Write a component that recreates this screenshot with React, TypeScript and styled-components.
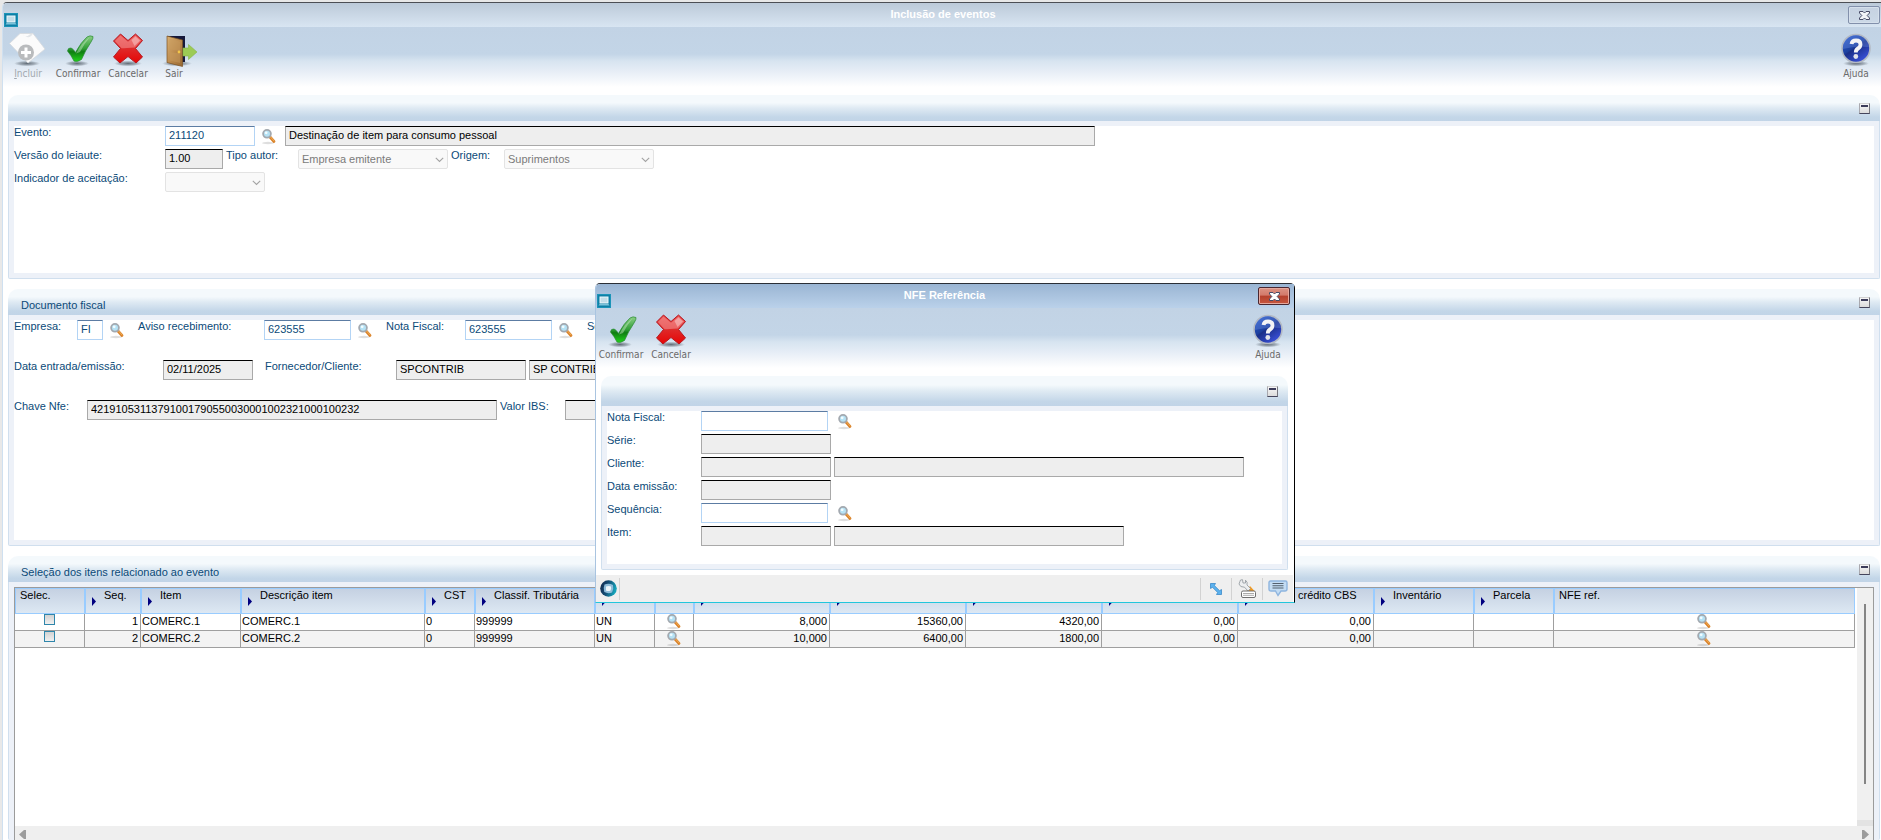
import React, { useId } from 'react';
import styled, { createGlobalStyle, css } from 'styled-components';

const sans = '"Liberation Sans", Arial, sans-serif';

const GlobalStyle = createGlobalStyle`
  *, *::before, *::after { box-sizing: border-box; }
  body { margin: 0; background: #e8e8e8; font: 11px/13px ${sans}; color: #000; }
  button, input, select { font: inherit; margin: 0; }
`;

/* ---------- window frame ---------- */

const Screen = styled.div`
  position: relative;
  display: flex;
  min-height: 100vh;
  padding: 2px 0 0 2px;
`;

const MainWindow = styled.main`
  flex: 1;
  min-width: 0;
  display: flex;
  flex-direction: column;
  background: #fff;
  border-left: 1px solid #cfe0f0;
  border-top: 1px solid #4c4f55;
  border-top-left-radius: 5px;
`;

const TitleBar = styled.header<{ $active?: boolean }>`
  display: flex;
  align-items: flex-end;
  justify-content: space-between;
  height: 24px;
  padding: 0 1px;
  background: ${p => (p.$active
    ? 'linear-gradient(#9ab5d3, #bad1ea)'
    : 'linear-gradient(#bccad9, #d8e5f2)')};
  border-top-left-radius: 4px;
`;

const Title = styled.h1`
  align-self: center;
  margin: 0 0 2px 20px;
  font-size: 11px;
  line-height: 20px;
  color: #fff;
`;

const CloseButton = styled.button<{ $active?: boolean }>`
  align-self: center;
  display: flex;
  align-items: center;
  justify-content: center;
  width: 32px;
  height: 18px;
  padding: 0;
  border: 1px solid ${p => (p.$active ? '#4a2730' : '#8290ab')};
  border-radius: 2px;
  box-shadow: inset 0 0 0 1px ${p => (p.$active ? '#e6a89d' : '#d6e0ec')};
  background: ${p => (p.$active
    ? 'linear-gradient(#dc9283 0, #d3796a 45%, #b5402d 50%, #c7573f 100%)'
    : 'linear-gradient(#c6d2e1, #ccd9e7)')};
`;

const Toolbar = styled.nav`
  display: flex;
  height: 60px;
  padding-top: 6px;
  background: linear-gradient(#c2d3e5 0, #c3d5e7 27px, #d7e4f0 34px, #e6edf6 44px, #fff 60px);
`;

const ToolButton = styled.button<{ $w?: number }>`
  display: flex;
  flex-direction: column;
  align-items: center;
  width: ${p => p.$w ?? 50}px;
  height: 50px;
  padding: 0;
  border: 0;
  background: none;
  color: #6a6a6a;
  font: 10px/16px "DejaVu Sans Condensed", "Noto Sans", sans-serif;
  &:disabled { color: #a2a8ae; }
  &:last-child { margin-left: auto; }
  svg { display: block; overflow: visible; }
`;

/* ---------- panels ---------- */

const Panels = styled.div`
  flex: 1;
  display: flex;
  flex-direction: column;
  gap: 10px;
  padding: 8px 1px 0 5px;
`;

const PanelBox = styled.section<{ $h?: number }>`
  display: flex;
  flex-direction: column;
  ${p => (p.$h ? css`min-height: ${p.$h}px;` : css`flex: 1;`)}
`;

const PanelHead = styled.div<{ $h?: number }>`
  display: flex;
  align-items: center;
  justify-content: space-between;
  height: ${p => p.$h ?? 26}px;
  padding: 0 10px 0 13px;
  border-radius: 10px 10px 0 0;
  background: linear-gradient(#f4f9fc 0, #f4f9fc 30%, #dfeaf3 50%, #c3d6e8 85%, #c1d4e7 100%);
`;

const PanelTitle = styled.h2`
  margin: 0;
  padding-top: 6px;
  font-size: 11px;
  font-weight: normal;
  color: #0b4a78;
`;

const CollapseButton = styled.button`
  display: flex;
  width: 11px;
  height: 11px;
  padding: 1px 1px 0;
  border: 1px solid #c9c9c9;
  border-color: #d3d3d3 #77777f #45455c #a8a8ae;
  background: linear-gradient(#f6f6f6, #dcdcdc);
  &::before {
    content: '';
    flex: 1;
    height: 2px;
    background: #3c3c5a;
  }
`;

const PanelBody = styled.div<{ $flush?: boolean }>`
  flex: 1;
  display: flex;
  flex-direction: column;
  padding: 5px;
  border: 1px solid #d0dfee;
  border-top: 0;
  border-radius: 0 0 2px 2px;
  background: #edf1f8;
  ${p => p.$flush && css`padding-bottom: 0; border-bottom: 0;`}
`;

const Form = styled.form<{ $gap?: number }>`
  flex: 1;
  display: flex;
  flex-direction: column;
  gap: ${p => p.$gap ?? 3}px;
  background: #fff;
`;

const Row = styled.div`
  display: flex;
  height: 20px;
`;

const Label = styled.label<{ $w: number }>`
  flex: none;
  width: ${p => p.$w}px;
  line-height: 12px;
  color: #0b4a78;
  white-space: nowrap;
`;

const Field = styled.input<{ $w: number; $after?: number }>`
  flex: none;
  width: ${p => p.$w}px;
  height: 20px;
  margin-right: ${p => p.$after ?? 3}px;
  padding: 0 3px 2px;
  border: 1px solid #b3d4f5;
  border-top-color: #5c7ca3;
  border-radius: 0;
  outline: 0;
  background: #fff;
  color: #0b4a78;
  &:read-only {
    border-color: #000 #a9a9a9 #a9a9a9;
    background: #eee;
    color: #000;
  }
`;

const SelectWrap = styled.div<{ $w: number }>`
  position: relative;
  flex: none;
  width: ${p => p.$w}px;
  margin-right: 3px;
  svg { position: absolute; right: 4px; top: 8px; pointer-events: none; }
`;

const Select = styled.select`
  appearance: none;
  width: 100%;
  height: 20px;
  padding: 0 3px;
  border: 1px solid #e3e3e3;
  border-radius: 2px;
  background: #f9f9f9;
  color: #7b7b7b;
  &:disabled { opacity: 1; }
`;

const LookupButton = styled.button<{ $gap?: number }>`
  flex: none;
  width: 14px;
  height: 16px;
  margin: 3px ${p => p.$gap ?? 9}px 0 4px;
  padding: 0;
  border: 0;
  background: none;
  svg { display: block; }
`;

/* ---------- grid ---------- */

const GridBox = styled.div`
  flex: 1;
  display: flex;
  flex-direction: column;
  border: solid #9b9b9b;
  border-width: 1px 1px 0;
  background: #fff;
`;

const GridMain = styled.div`
  flex: 1;
  display: flex;
  gap: 2px;
`;

const GridArea = styled.div`
  flex: 1;
  min-width: 0;
`;

const Table = styled.table`
  width: 100%;
  table-layout: fixed;
  border-collapse: separate;
  border-spacing: 0;
`;

const Th = styled.th`
  height: 26px;
  padding: 0 0 0 4px;
  border: 1px solid #99ccff;
  background: linear-gradient(#c5d1e2, #dde8f3);
  font-weight: normal;
  text-align: left;
  vertical-align: top;
  white-space: nowrap;
`;

const Sortable = styled.span`
  display: flex;
  gap: 8px;
  padding-left: 2px;
  svg { margin-top: 8px; }
`;

const Tr = styled.tr`
  background: #fff;
  &:nth-child(even) { background: #f3f3f3; }
`;

const Td = styled.td<{ $align?: 'right' | 'center' }>`
  height: 17px;
  padding: 0 2px 0 1px;
  border-right: 1px solid #9f9f9f;
  border-bottom: 1px solid #9f9f9f;
  line-height: 14px;
  text-align: ${p => p.$align ?? 'left'};
  vertical-align: top;
  white-space: nowrap;
`;

const Check = styled.input`
  appearance: none;
  display: block;
  width: 11px;
  height: 11px;
  margin: 0 auto;
  border: 1px solid #2f86ab;
  background: linear-gradient(#d2d2d2, #f0f0f0);
`;

const CellLookup = styled.button`
  display: block;
  width: 14px;
  height: 16px;
  margin: 0 auto;
  padding: 0;
  border: 0;
  background: none;
  svg { display: block; }
`;

const VScroll = styled.div`
  display: flex;
  flex-direction: column;
  align-items: center;
  justify-content: space-between;
  width: 16px;
  padding-top: 16px;
  background: #f0f0f0;
`;

const Thumb = styled.div`
  width: 2px;
  height: 180px;
  background: #858585;
`;

const ScrollCorner = styled.div`
  width: 16px;
  height: 6px;
  background: #e3e3e3;
`;

const HScroll = styled.div`
  display: flex;
  align-items: center;
  justify-content: space-between;
  height: 14px;
  padding: 2px 4px 0;
  background: #efefef;
`;

/* ---------- dialog ---------- */

const Dialog = styled.div`
  position: absolute;
  left: 595px;
  top: 283px;
  width: 700px;
  display: flex;
  flex-direction: column;
  border: 1px solid #a9c4e0;
  border-top-color: #2b2f36;
  border-right-color: #000;
  border-bottom-color: #22c6dc;
  border-radius: 5px 5px 0 0;
  background: #fff;
`;

const DialogPanels = styled.div`
  display: flex;
  flex-direction: column;
  padding: 8px 6px 5px 5px;
`;

const DialogTitleBar = styled(TitleBar)`
  padding-right: 4px;
`;

const DialogToolbar = styled(Toolbar)`
  padding-right: 1px;
`;

const StatusBar = styled.footer`
  display: flex;
  align-items: center;
  height: 27px;
  margin-right: 1px;
  padding: 0 0 0 4px;
  background: #efefef;
`;

const StatusItem = styled.button<{ $first?: boolean }>`
  display: flex;
  align-items: center;
  justify-content: center;
  width: ${p => (p.$first ? 20 : 31)}px;
  height: 22px;
  padding: 0;
  border: 0 solid #d2d2d2;
  border-left-width: ${p => (p.$first ? 0 : 1)}px;
  border-right-width: ${p => (p.$first ? 1 : 0)}px;
  background: none;
  ${p => p.$first && css`justify-content: flex-start; margin-right: auto;`}
`;

/* ---------- drawings ---------- */

const AppIcon = () => (
  <svg width="14" height="14" viewBox="0 0 14 14" aria-hidden="true">
    <rect width="14" height="14" fill="#0f7fa6" />
    <rect x="0.500" y="0.500" width="13" height="13" fill="none" stroke="#1b94b8" />
    <rect x="3" y="3" width="8" height="6" fill="#c3dde8" stroke="#eef9fc" strokeWidth="1" />
    <path d="M2.500 10 H11.500 L12.500 11.500 H1.500 Z" fill="#7cc3da" />
  </svg>
);

const CloseGlyph = ({ fill = '#fff' }: { fill?: string }) => (
  <svg width="13" height="11" viewBox="0 0 13 11" aria-hidden="true">
    <path
      d="M1.500 1.500 H5 L6.500 3 L8 1.500 H11.500 V3 L9.200 5.500 L11.500 8 V9.500 H8 L6.500 8 L5 9.500 H1.500 V8 L3.800 5.500 L1.500 3 Z"
      fill={fill}
      stroke="#474b66"
    />
  </svg>
);

const Shadow = ({ cx, rx = 13 }: { cx: number; rx?: number }) => {
  const id = useId();
  return (
    <>
      <radialGradient id={id}>
        <stop offset="0" stopColor="#3c4650" stopOpacity="0.75" />
        <stop offset="0.6" stopColor="#4a5560" stopOpacity="0.4" />
        <stop offset="1" stopColor="#5a6570" stopOpacity="0" />
      </radialGradient>
      <ellipse cx={cx} cy="30.500" rx={rx} ry="2.800" fill={`url(#${id})`} />
    </>
  );
};

const NewIcon = () => (
  <svg width="38" height="33" viewBox="0 0 38 33" aria-hidden="true">
    <Shadow cx={18} />
    <path d="M11 0.500 H24 L36 16 L19 30 L0.500 10.500 Z" fill="#fbfbfb" stroke="#d5d9dd" strokeWidth="0.800" />
    <path d="M13 0.500 Q17 5 20 2 Q21 0.500 24 0.500 Q20 8 13 0.500 Z" fill="#e3e6e9" />
    <circle cx="17" cy="19.500" r="8" fill="#b9bbbd" />
    <path d="M15.500 14.500 H18.500 V18 H22 V21 H18.500 V24.500 H15.500 V21 H12 V18 H15.500 Z" fill="#fff" />
  </svg>
);

const ConfirmIcon = () => {
  const id = useId();
  return (
    <svg width="32" height="33" viewBox="0 0 32 33" aria-hidden="true">
      <linearGradient id={id} x1="0" y1="0" x2="0" y2="1">
        <stop offset="0" stopColor="#8ccf86" />
        <stop offset="0.5" stopColor="#2f9e35" />
        <stop offset="0.62" stopColor="#0f7d12" />
        <stop offset="1" stopColor="#22d51a" />
      </linearGradient>
      <Shadow cx={15} rx={12} />
      <path
        d="M5.500 18 Q6 14.500 9 15 Q11 15.500 13.500 19.500 Q19 9 25 4 Q28 2 31 3.500 Q31.500 5 29 9 Q23 18 19.500 26.500 Q15 29.500 12 28 Q9 22 5.500 18 Z"
        fill={`url(#${id})`}
        stroke="#2a8a34"
        strokeWidth="0.700"
      />
      <path d="M14 20.500 Q20 9 27.500 4.500 Q22 11 18 19 Z" fill="#c9ecc5" opacity="0.450" />
    </svg>
  );
};

const CancelIcon = () => {
  const id = useId();
  return (
    <svg width="32" height="33" viewBox="0 0 32 33" aria-hidden="true">
      <linearGradient id={id} x1="0" y1="0" x2="0" y2="1">
        <stop offset="0" stopColor="#e94848" />
        <stop offset="0.5" stopColor="#df2a2a" />
        <stop offset="1" stopColor="#e60505" />
      </linearGradient>
      <Shadow cx={16} rx={14} />
      <path
        d="M1.500 8 L8.500 1 L16 7.500 L23.500 1 L30.500 7.500 L23.500 15.500 L30.500 24 L24 30 L16 23.500 L8 30 L1.500 24 L8.500 15.500 Z"
        fill={`url(#${id})`}
        stroke="#b51a22"
        strokeLinejoin="round"
      />
      <path d="M16 8.800 L23.500 2.400 L29.200 7.500 L23 14.500 Q14 15 9.500 15.300 L2.900 8 L8.500 2.400 Z" fill="#ffd0d0" opacity="0.350" />
      <path d="M19.500 7 L23.500 3.500 L28 7.500 L22.500 13 Z" fill="#fff" opacity="0.350" />
    </svg>
  );
};

const ExitIcon = () => {
  const id = useId();
  return (
    <svg width="42" height="33" viewBox="0 0 42 33" aria-hidden="true">
      <linearGradient id={id} x1="0" y1="0" x2="1" y2="1">
        <stop offset="0" stopColor="#d9b072" />
        <stop offset="0.5" stopColor="#bd8c4f" />
        <stop offset="1" stopColor="#966732" />
      </linearGradient>
      <Shadow cx={24} rx={15} />
      <rect x="14" y="3" width="18" height="26" fill="#16193a" />
      <path d="M14 3 L29.500 7 V33.500 L14 29.500 Z" fill={`url(#${id})`} stroke="#7b5223" strokeWidth="0.700" />
      <path d="M16.500 6 L27 8.500 V18 L16.500 16.500 Z M16.500 19 L27 20.500 V30 L16.500 27.500 Z" fill="#c69a5e" opacity="0.500" />
      <circle cx="26" cy="19" r="1.400" fill="#f4c64a" />
      <path d="M30 15 H35.500 V11.500 L44 19 L35.500 26.500 V23 H30 Z" fill="#9ccb55" stroke="#87b548" strokeWidth="0.600" />
    </svg>
  );
};

const HelpIcon = () => {
  const id = useId();
  return (
    <svg width="32" height="33" viewBox="0 0 32 33" aria-hidden="true">
      <linearGradient id={id} x1="0" y1="0" x2="0.700" y2="1">
        <stop offset="0" stopColor="#2f62d6" />
        <stop offset="0.5" stopColor="#1c3f9e" />
        <stop offset="0.55" stopColor="#1a2f88" />
        <stop offset="1" stopColor="#3b52dd" />
      </linearGradient>
      <Shadow cx={16} rx={13} />
      <circle cx="16" cy="15.500" r="14" fill={`url(#${id})`} stroke="#b4bac4" strokeWidth="1.600" />
      <path d="M3 16 A13 13 0 0 1 29 14 Q15 13 3 16 Z" fill="#7b9bea" opacity="0.300" />
      <path
        d="M11.500 11 Q12 7.500 16 7.500 Q20.500 7.500 20.500 11.200 Q20.500 14 18 15.500 Q15.800 16.800 15.800 19.500"
        fill="none"
        stroke="#f4f4f6"
        strokeWidth="3.800"
      />
      <circle cx="15.800" cy="23.500" r="2.400" fill="#e1e3ea" />
    </svg>
  );
};

const Magnifier = () => (
  <svg width="14" height="16" viewBox="0 0 14 16" aria-hidden="true">
    <ellipse cx="6" cy="14" rx="6" ry="1.200" fill="#000" opacity="0.130" />
    <path d="M8 8 L12 12.500" stroke="#d9822b" strokeWidth="2.800" strokeLinecap="round" />
    <path d="M8.200 7.600 L12.300 12.200" stroke="#f6b45c" strokeWidth="0.900" />
    <circle cx="5" cy="4.800" r="3.900" fill="#b5e2f5" stroke="#a3a9b0" strokeWidth="1.800" />
    <circle cx="4.200" cy="3.800" r="1.400" fill="#f2fcff" />
  </svg>
);

const Chevron = () => (
  <svg width="9" height="6" viewBox="0 0 9 6" aria-hidden="true">
    <path d="M0.800 0.800 L4.500 4.500 L8.200 0.800" fill="none" stroke="#a3a3a3" strokeWidth="1.100" />
  </svg>
);

const SortArrow = () => (
  <svg width="4" height="9" viewBox="0 0 4 9" aria-hidden="true">
    <path d="M0 0 L4 4.500 L0 9 Z" fill="#000080" />
  </svg>
);

const ScrollArrow = ({ right }: { right?: boolean }) => (
  <svg width="7" height="9" viewBox="0 0 7 9" aria-hidden="true">
    <path d={right ? 'M0 0 L2 0 L7 4.500 L2 9 L0 9 Z' : 'M7 0 L5 0 L0 4.500 L5 9 L7 9 Z'} fill="#9c9c9c" />
  </svg>
);

const OrbIcon = () => {
  const id = useId();
  return (
    <svg width="17" height="17" viewBox="0 0 17 17" aria-hidden="true">
      <linearGradient id={id} x1="0" y1="0" x2="1" y2="0.300">
        <stop offset="0" stopColor="#14264a" />
        <stop offset="0.5" stopColor="#134c74" />
        <stop offset="1" stopColor="#15a3b9" />
      </linearGradient>
      <circle cx="8.500" cy="8.500" r="8.300" fill={`url(#${id})`} />
      <path d="M4.500 4.500 Q9 2.800 13 5 Q14 9 12 12.500 Q8 14 4.300 12 Q3 8 4.500 4.500 Z" fill="#8fbcd9" />
      <path d="M6 6.500 Q9 5.500 11 6.500 Q11.500 9 10.300 10.800 Q8 11.500 6 10.500 Z" fill="#eef6fb" />
    </svg>
  );
};

const ResizeIcon = () => (
  <svg width="14" height="14" viewBox="0 0 14 14" aria-hidden="true">
    <path
      d="M1.500 1.500 H6.500 L5.300 3.500 L10.500 8.700 L12.500 7.500 V12.500 H7.500 L8.700 10.500 L3.500 5.300 L1.500 6.500 Z"
      fill="#5cb2ee"
      stroke="#2b7fc4"
      strokeWidth="0.700"
    />
  </svg>
);

const ToolsIcon = () => (
  <svg width="18" height="19" viewBox="0 0 18 19" aria-hidden="true">
    <path d="M8.500 12 L12 7 L16.500 12 Z" fill="#f39a1e" />
    <path
      d="M2.500 1 L4.500 0.700 L5 4 L7.500 4 L7.500 1.200 Q10 3 9 6 L12.500 9.500 L10 12 L6.500 8.200 Q2 8.500 1 5 Z"
      fill="#eceef0"
      stroke="#8e959c"
      strokeWidth="0.800"
    />
    <rect x="3.500" y="12" width="14" height="6.500" rx="1.500" fill="#fff" stroke="#6f6f6f" />
    <path d="M5.500 14.500 H16 M5.500 16.300 H16" stroke="#555" strokeDasharray="1 1" />
  </svg>
);

const ChatIcon = () => (
  <svg width="20" height="17" viewBox="0 0 20 17" aria-hidden="true">
    <path d="M2.500 1 H17.500 Q19 1 19 2.500 V9 Q19 11 17 11 H13 L10 15.500 L7.500 11 H3 Q1 11 1 9 V2.500 Q1 1 2.500 1 Z" fill="#c3dcf3" stroke="#8fb5df" strokeWidth="1.400" />
    <path d="M4.500 3.500 H15.500 M4.500 5.800 H15.500 M4.500 8 H15.500" stroke="#53606e" strokeWidth="1.100" />
  </svg>
);

/* ---------- composed parts ---------- */

interface PanelProps {
  title?: string;
  height?: number;
  headHeight?: number;
  flush?: boolean;
  children: React.ReactNode;
}

const Panel = ({ title, height, headHeight, flush, children }: PanelProps) => (
  <PanelBox $h={height}>
    <PanelHead $h={headHeight}>
      <PanelTitle>{title}</PanelTitle>
      <CollapseButton type="button" aria-label="Recolher" />
    </PanelHead>
    <PanelBody $flush={flush}>{children}</PanelBody>
  </PanelBox>
);

const Lookup = ({ gap }: { gap?: number }) => (
  <LookupButton type="button" aria-label="Pesquisar" $gap={gap}><Magnifier /></LookupButton>
);

interface LabelledProps {
  label: string;
  labelWidth: number;
  width: number;
  value?: string;
  readOnly?: boolean;
  after?: number;
}

const LabelledField = ({ label, labelWidth, width, value = '', readOnly, after }: LabelledProps) => {
  const id = useId();
  return (
    <>
      <Label htmlFor={id} $w={labelWidth}>{label}</Label>
      <Field id={id} $w={width} $after={after} defaultValue={value} readOnly={readOnly} />
    </>
  );
};

const LabelledSelect = ({ label, labelWidth, width, value = '' }: LabelledProps) => {
  const id = useId();
  return (
    <>
      <Label htmlFor={id} $w={labelWidth}>{label}</Label>
      <SelectWrap $w={width}>
        <Select id={id} disabled defaultValue={value}><option>{value}</option></Select>
        <Chevron />
      </SelectWrap>
    </>
  );
};

interface Column {
  title: string;
  width?: number;
  sortable?: boolean;
}

const columns: Column[] = [
  { title: 'Selec.', width: 70 },
  { title: 'Seq.', width: 56, sortable: true },
  { title: 'Item', width: 100, sortable: true },
  { title: 'Descrição item', width: 184, sortable: true },
  { title: 'CST', width: 50, sortable: true },
  { title: 'Classif. Tributária', width: 120, sortable: true },
  { title: 'UM', width: 60, sortable: true },
  { title: '', width: 39 },
  { title: 'Quantidade', width: 136, sortable: true },
  { title: 'Valor item', width: 136, sortable: true },
  { title: 'Valor IBS', width: 136, sortable: true },
  { title: 'Valor CBS', width: 136, sortable: true },
  { title: 'Estorno crédito CBS', width: 136, sortable: true },
  { title: 'Inventário', width: 100, sortable: true },
  { title: 'Parcela', width: 80, sortable: true },
  { title: 'NFE ref.' },
];

const items = [
  { seq: '1', code: 'COMERC.1', cst: '0', classif: '999999', unit: 'UN', amounts: ['8,000', '15360,00', '4320,00', '0,00', '0,00'] },
  { seq: '2', code: 'COMERC.2', cst: '0', classif: '999999', unit: 'UN', amounts: ['10,000', '6400,00', '1800,00', '0,00', '0,00'] },
];

const ItemsGrid = () => (
  <GridBox>
    <GridMain>
      <GridArea>
        <Table>
          <colgroup>
            {columns.map((c, i) => <col key={i} width={c.width} />)}
          </colgroup>
          <thead>
            <tr>
              {columns.map((c, i) => (
                <Th key={i} scope="col">
                  {c.sortable ? <Sortable><SortArrow />{c.title}</Sortable> : c.title}
                </Th>
              ))}
            </tr>
          </thead>
          <tbody>
            {items.map(item => (
              <Tr key={item.seq}>
                <Td><Check type="checkbox" aria-label={`Selecionar item ${item.seq}`} /></Td>
                <Td $align="right">{item.seq}</Td>
                <Td>{item.code}</Td>
                <Td>{item.code}</Td>
                <Td>{item.cst}</Td>
                <Td>{item.classif}</Td>
                <Td>{item.unit}</Td>
                <Td $align="center"><CellLookup type="button" aria-label="Pesquisar unidade"><Magnifier /></CellLookup></Td>
                {item.amounts.map((amount, i) => <Td key={i} $align="right">{amount}</Td>)}
                <Td />
                <Td />
                <Td $align="center"><CellLookup type="button" aria-label="Pesquisar NFE"><Magnifier /></CellLookup></Td>
              </Tr>
            ))}
          </tbody>
        </Table>
      </GridArea>
      <VScroll><Thumb /><ScrollCorner /></VScroll>
    </GridMain>
    <HScroll><ScrollArrow /><ScrollArrow right /></HScroll>
  </GridBox>
);

const ReferenceDialog = () => (
  <Dialog role="dialog" aria-label="NFE Referência">
    <DialogTitleBar $active>
      <AppIcon />
      <Title as="h2">NFE Referência</Title>
      <CloseButton type="button" aria-label="Fechar" $active><CloseGlyph /></CloseButton>
    </DialogTitleBar>
    <DialogToolbar>
      <ToolButton type="button"><ConfirmIcon />Confirmar</ToolButton>
      <ToolButton type="button"><CancelIcon />Cancelar</ToolButton>
      <ToolButton type="button"><HelpIcon />Ajuda</ToolButton>
    </DialogToolbar>
    <DialogPanels>
      <Panel height={194} headHeight={30}>
        <Form>
          <Row><LabelledField label="Nota Fiscal:" labelWidth={94} width={127} after={6} /><Lookup /></Row>
          <Row><LabelledField label="Série:" labelWidth={94} width={130} readOnly /></Row>
          <Row>
            <LabelledField label="Cliente:" labelWidth={94} width={130} readOnly />
            <Field aria-label="Nome do cliente" $w={410} readOnly />
          </Row>
          <Row><LabelledField label="Data emissão:" labelWidth={94} width={130} readOnly /></Row>
          <Row><LabelledField label="Sequência:" labelWidth={94} width={127} after={6} /><Lookup /></Row>
          <Row>
            <LabelledField label="Item:" labelWidth={94} width={130} readOnly />
            <Field aria-label="Descrição do item" $w={290} readOnly />
          </Row>
        </Form>
      </Panel>
    </DialogPanels>
    <StatusBar>
      <StatusItem type="button" aria-label="Início" $first><OrbIcon /></StatusItem>
      <StatusItem type="button" aria-label="Redimensionar"><ResizeIcon /></StatusItem>
      <StatusItem type="button" aria-label="Ferramentas"><ToolsIcon /></StatusItem>
      <StatusItem type="button" aria-label="Mensagens"><ChatIcon /></StatusItem>
    </StatusBar>
  </Dialog>
);

export default function App() {
  return (
    <>
      <GlobalStyle />
      <Screen>
        <MainWindow>
          <TitleBar>
            <AppIcon />
            <Title>Inclusão de eventos</Title>
            <CloseButton type="button" aria-label="Fechar janela"><CloseGlyph fill="#f2f4f8" /></CloseButton>
          </TitleBar>
          <Toolbar>
            <ToolButton type="button" disabled><NewIcon /><span><u>I</u>ncluir</span></ToolButton>
            <ToolButton type="button"><ConfirmIcon />Confirmar</ToolButton>
            <ToolButton type="button"><CancelIcon />Cancelar</ToolButton>
            <ToolButton type="button" $w={42}><ExitIcon />Sair</ToolButton>
            <ToolButton type="button"><HelpIcon />Ajuda</ToolButton>
          </Toolbar>
          <Panels>
            <Panel height={184}>
              <Form>
                <Row>
                  <LabelledField label="Evento:" labelWidth={151} width={90} value="211120" />
                  <Lookup />
                  <Field aria-label="Descrição do evento" $w={810} readOnly defaultValue="Destinação de item para consumo pessoal" />
                </Row>
                <Row>
                  <LabelledField label="Versão do leiaute:" labelWidth={151} width={58} value="1.00" readOnly />
                  <LabelledSelect label="Tipo autor:" labelWidth={72} width={150} value="Empresa emitente" />
                  <LabelledSelect label="Origem:" labelWidth={53} width={150} value="Suprimentos" />
                </Row>
                <Row><LabelledSelect label="Indicador de aceitação:" labelWidth={151} width={100} /></Row>
              </Form>
            </Panel>
            <Panel title="Documento fiscal" height={257}>
              <Form $gap={20}>
                <Row>
                  <LabelledField label="Empresa:" labelWidth={63} width={26} value="FI" />
                  <Lookup gap={14} />
                  <LabelledField label="Aviso recebimento:" labelWidth={126} width={87} value="623555" />
                  <Lookup gap={14} />
                  <LabelledField label="Nota Fiscal:" labelWidth={79} width={87} value="623555" />
                  <Lookup gap={14} />
                  <LabelledField label="Série:" labelWidth={60} width={50} readOnly />
                </Row>
                <Row>
                  <LabelledField label="Data entrada/emissão:" labelWidth={149} width={90} value="02/11/2025" readOnly after={12} />
                  <LabelledField label="Fornecedor/Cliente:" labelWidth={131} width={130} value="SPCONTRIB" readOnly />
                  <Field aria-label="Nome do fornecedor" $w={400} readOnly defaultValue="SP CONTRIBUINTE" />
                </Row>
                <Row>
                  <LabelledField label="Chave Nfe:" labelWidth={73} width={410} value="42191053113791001790550030001002321000100232" readOnly />
                  <LabelledField label="Valor IBS:" labelWidth={65} width={130} readOnly />
                </Row>
              </Form>
            </Panel>
            <Panel title="Seleção dos itens relacionado ao evento" flush>
              <ItemsGrid />
            </Panel>
          </Panels>
        </MainWindow>
        <ReferenceDialog />
      </Screen>
    </>
  );
}
